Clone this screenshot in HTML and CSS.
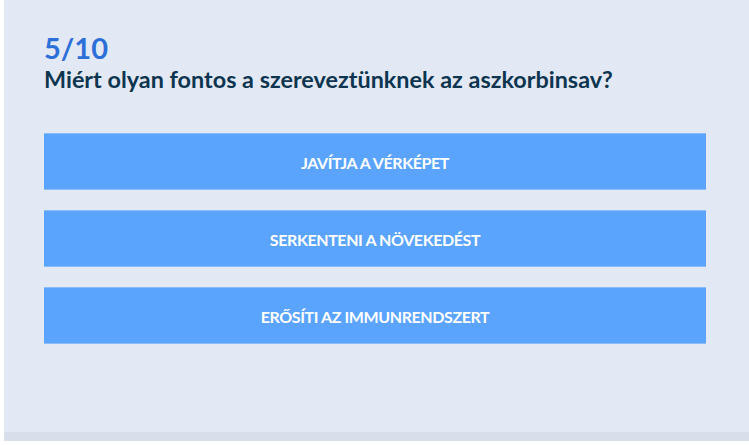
FILE: index.html
```html
<!DOCTYPE html>
<html lang="hu">
<head>
<meta charset="utf-8">
<title>Kvíz</title>
<link rel="stylesheet" href="styles.css">
</head>
<body>
<div class="page">
  <main class="quiz">
    <div class="counter">5/10</div>
    <h1 class="question">Miért olyan fontos a szereveztünknek az aszkorbinsav?</h1>
    <div class="answers">
      <button class="answer">JAVÍTJA A VÉRKÉPET</button>
      <button class="answer">SERKENTENI A NÖVEKEDÉST</button>
      <button class="answer">ERŐSÍTI AZ IMMUNRENDSZERT</button>
    </div>
  </main>
  <div class="footer-strip"></div>
</div>
</body>
</html>
```

FILE: styles.css
```css
html, body {
  margin: 0;
  padding: 0;
  background: #ffffff;
}
body {
  font-family: Lato, "Open Sans", "Liberation Sans", sans-serif;
}
.page {
  margin-left: 4px;
  width: 745px;
}
.quiz {
  background: #e2e9f4;
  height: 432px;
  box-sizing: border-box;
  padding: 32px 43px 0 40px;
}
.counter {
  color: #2d6fd8;
  font-weight: 700;
  font-size: 29px;
  line-height: 32px;
}
.question {
  margin: 0;
  color: #0e3550;
  font-weight: 700;
  font-size: 23.4px;
  line-height: 30px;
}
.answers {
  margin-top: 39px;
  display: flex;
  flex-direction: column;
  gap: 20px;
}
.answer {
  height: 57px;
  background: #5ba4fe;
  border: none;
  border-top: 1px solid #8cbcf6;
  border-bottom: 1px solid #8cbcf6;
  color: #ffffff;
  font-family: Lato, "Open Sans", "Liberation Sans", sans-serif;
  font-weight: 700;
  font-size: 16px;
  letter-spacing: -0.4px;
  padding: 2px 0 0;
  cursor: pointer;
}
.footer-strip {
  height: 9px;
  background: #d8dfeb;
}
```
